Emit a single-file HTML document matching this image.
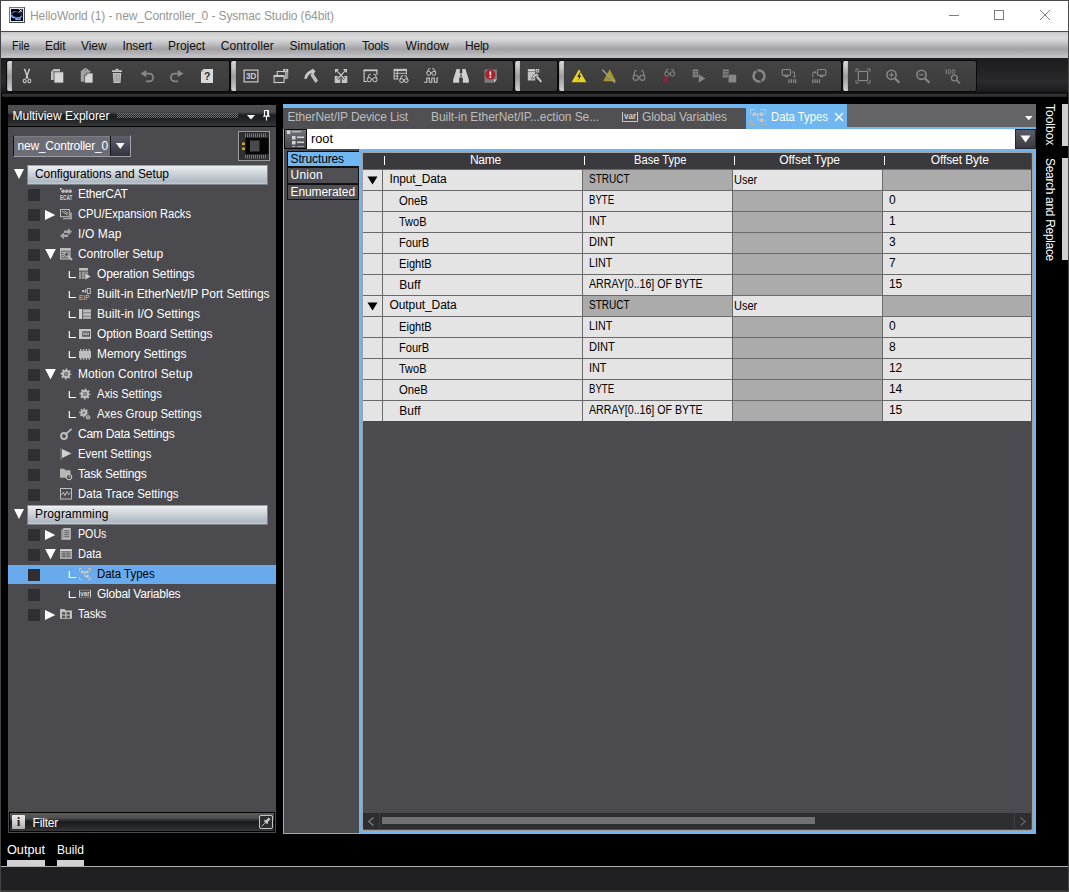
<!DOCTYPE html>
<html lang="en">
<head>
<meta charset="utf-8">
<title>HelloWorld (1) - new_Controller_0 - Sysmac Studio (64bit)</title>
<style>
html,body{margin:0;padding:0;background:#000;}
body{width:1069px;height:892px;overflow:hidden;font-family:"Liberation Sans",sans-serif;font-size:12px;}
#app{position:relative;width:1069px;height:892px;overflow:hidden;background:#000;}
#app div,#app span.t,#app svg{position:absolute;box-sizing:border-box;}
span.t{white-space:pre;line-height:16px;height:16px;}
.grp{background:linear-gradient(#444444,#3f3f3f 55%,#3a3a3a);border-radius:2px;box-shadow:0 0 0 1px #0a0a0a;}
.grip{background:linear-gradient(90deg,rgba(0,0,0,.18),rgba(0,0,0,0) 35%,rgba(0,0,0,0) 70%,rgba(0,0,0,.12)),linear-gradient(#dadada,#c6c6c6 22%,#9e9e9e 52%,#bcbcbc 80%,#d2d2d2);border-radius:2px 0 0 2px;}
.cb{background:#2f2f33;}
.cl{background:#e4e4e4;}
.cg{background:#ababab;}
</style>
</head>
<body>
<div id="app">
<div style="left:0px;top:0px;width:1069px;height:31px;background:#fff;"></div>
<span class="t" style="left:30px;top:8px;color:#969696;letter-spacing:-0.092px;">HelloWorld (1) - new_Controller_0 - Sysmac Studio (64bit)</span>
<svg style="left:9px;top:7px" width="16" height="16" viewBox="0 0 16 16"><rect x="0.500" y="0.500" width="15" height="15" fill="#e8e8ee" stroke="#70747a" stroke-width="1"/><path d="M0.500 15.500h15V0.500" fill="none" stroke="#454950" stroke-width="1"/><rect x="2" y="2" width="12" height="12" fill="#000"/><ellipse cx="7.800" cy="7.800" rx="5" ry="3" transform="rotate(18 7.800 7.800)" fill="none" stroke="#1f3f9e" stroke-width="1.500" opacity=".850"/><path d="M2.300 6.500Q3.500 4.600 6.500 4.600" fill="none" stroke="#4a78d8" stroke-width="1"/><path d="M2.300 8Q3.500 10.800 7 11Q10.500 11.300 12.800 9.200" fill="none" stroke="#62a8e6" stroke-width="1.400"/><path d="M2.500 9.800L4.500 11.300" stroke="#8fd0f4" stroke-width=".900"/><rect x="6" y="11.200" width="6" height="1.900" fill="#4c86dc"/><rect x="7" y="11.600" width="1.200" height="1.500" fill="#9cc8f0"/><rect x="9.300" y="11.600" width="1.600" height="1.500" fill="#84b4ec"/><path d="M10 2.200L13.200 5.400M13.200 2.200L10 5.400" stroke="#fff" stroke-width="1"/></svg>
<svg style="left:940px;top:5px" width="120" height="22" viewBox="0 0 120 22"><path d="M9 10.5h10" stroke="#7e7e7e" stroke-width="1" fill="none"/><rect x="54.500" y="5.500" width="9" height="9" stroke="#7e7e7e" stroke-width="1" fill="none"/><path d="M100 5l10 10M110 5l-10 10" stroke="#7e7e7e" stroke-width="1" fill="none"/></svg>
<div style="left:0px;top:31px;width:1069px;height:27px;background:linear-gradient(#4a4a4a 0,#4a4a4a 1px,#c6c6c8 1px,#dcdcdc 6px,#d0d0d2 10px,#a3a3a7 18px,#acacb0 21px,#c4c4c6 26px,#bcbcbe 27px);"></div>
<span class="t" style="left:11.5px;top:37.5px;color:#101010;transform-origin:0 50%;transform:scaleX(0.9047);">File</span>
<span class="t" style="left:45px;top:37.5px;color:#101010;letter-spacing:-0.047px;">Edit</span>
<span class="t" style="left:81px;top:37.5px;color:#101010;letter-spacing:-0.074px;">View</span>
<span class="t" style="left:122.5px;top:37.5px;color:#101010;letter-spacing:-0.086px;">Insert</span>
<span class="t" style="left:168px;top:37.5px;color:#101010;letter-spacing:-0.051px;">Project</span>
<span class="t" style="left:220.8px;top:37.5px;color:#101010;letter-spacing:0.097px;">Controller</span>
<span class="t" style="left:289.5px;top:37.5px;color:#101010;letter-spacing:-0.003px;">Simulation</span>
<span class="t" style="left:362px;top:37.5px;color:#101010;letter-spacing:-0.243px;">Tools</span>
<span class="t" style="left:405.5px;top:37.5px;color:#101010;letter-spacing:0.102px;">Window</span>
<span class="t" style="left:465px;top:37.5px;color:#101010;letter-spacing:-0.222px;">Help</span>
<div style="left:0px;top:58px;width:1069px;height:36px;background:linear-gradient(#1c1c1e,#222224 30%,#2a2a2e 65%,#1e1e20 90%,#0c0c0c);"></div>
<div class="grp" style="left:7px;top:61px;width:222px;height:30px;"></div>
<div class="grip" style="left:7px;top:61px;width:5px;height:30px;"></div>
<div class="grp" style="left:231px;top:61px;width:282px;height:30px;"></div>
<div class="grip" style="left:231px;top:61px;width:5px;height:30px;"></div>
<div class="grp" style="left:515px;top:61px;width:42px;height:30px;"></div>
<div class="grip" style="left:515px;top:61px;width:5px;height:30px;"></div>
<div class="grp" style="left:559px;top:61px;width:282px;height:30px;"></div>
<div class="grip" style="left:559px;top:61px;width:5px;height:30px;"></div>
<div class="grp" style="left:843px;top:61px;width:133px;height:30px;"></div>
<div class="grip" style="left:843px;top:61px;width:5px;height:30px;"></div>
<div style="left:2px;top:94px;width:1065px;height:3px;background:linear-gradient(#3e4042 0,#303234 1px,#2a2c2e 2px,#222426 3px);border-radius:1px;"></div>
<svg style="left:19px;top:68px" width="16" height="16" viewBox="0 0 16 16"><path d="M4.700 0.800L6.300 0.800L9.600 10.300L8.400 11z" fill="#cacaca"/><path d="M11.300 0.800L9.700 0.800L6.400 10.300L7.600 11z" fill="#cacaca"/><ellipse cx="5.700" cy="13" rx="1.400" ry="1.800" fill="none" stroke="#cacaca" stroke-width="1.100" transform="rotate(-20 5.700 13)"/><ellipse cx="10.300" cy="13" rx="1.400" ry="1.800" fill="none" stroke="#cacaca" stroke-width="1.100" transform="rotate(20 10.300 13)"/></svg>
<svg style="left:49px;top:68px" width="16" height="16" viewBox="0 0 16 16"><path d="M4.500 1H11v11H2V3.500z" fill="#c2c2c2"/><path d="M2 3.500h2.500V1z" fill="#8c8c8c"/><path d="M5 3.800h9.700V15H5z" fill="#d6d6d6" stroke="#4a4a4a" stroke-width=".800"/></svg>
<svg style="left:79px;top:68px" width="16" height="16" viewBox="0 0 16 16"><rect x="1.800" y="2.300" width="9.400" height="11.500" rx="1" fill="#a4a4a4"/><path d="M4.500 2.800V1.600Q6.500 0 8.500 1.600V2.800" fill="none" stroke="#b8b8b8" stroke-width="1.200"/><path d="M7.800 5H14v10H5.600V7.200z" fill="#d6d6d6" stroke="#4a4a4a" stroke-width=".800"/><path d="M5.600 7.200h2.200V5" fill="#9a9a9a" stroke="#4a4a4a" stroke-width=".600"/></svg>
<svg style="left:109px;top:68px" width="16" height="16" viewBox="0 0 16 16"><rect x="6.500" y="0.800" width="3" height="1.400" fill="#cacaca"/><rect x="3" y="2.300" width="10" height="1.700" rx=".500" fill="#cacaca"/><path d="M3.800 5h8.400l-.700 10H4.500z" fill="#c4c4c4"/><path d="M5.800 6v8M7.300 6v8M8.800 6v8M10.300 6v8" stroke="#8a8a8a" stroke-width=".700"/></svg>
<svg style="left:139px;top:68px" width="16" height="16" viewBox="0 0 16 16"><path d="M6.500 5.600H10.200A3.900 3.900 0 0 1 10.200 13.400H6.800" fill="none" stroke="#878787" stroke-width="1.800"/><path d="M1.500 5.600L7.300 2v7.200z" fill="#878787"/></svg>
<svg style="left:169px;top:68px" width="16" height="16" viewBox="0 0 16 16"><path d="M9.500 5.600H5.800A3.900 3.900 0 0 0 5.800 13.400H9.200" fill="none" stroke="#878787" stroke-width="1.800"/><path d="M14.500 5.600L8.700 2v7.200z" fill="#878787"/></svg>
<svg style="left:199px;top:68px" width="16" height="16" viewBox="0 0 16 16"><path d="M4.500 1H14v14H2V3.500z" fill="#d8d8d8"/><path d="M2 3.500h2.500V1z" fill="#9a9a9a"/><text x="8.300" y="12.300" font-family="Liberation Sans, sans-serif" font-weight="bold" font-size="10.500" text-anchor="middle" fill="#2e2e2e">?</text></svg>
<svg style="left:243px;top:68px" width="16" height="16" viewBox="0 0 16 16"><rect x="1.100" y="2.100" width="13.800" height="11.800" fill="none" stroke="#cacaca" stroke-width="1.200"/><text x="8" y="11.300" font-family="Liberation Sans, sans-serif" font-weight="bold" font-size="8.500" text-anchor="middle" fill="#cacaca" letter-spacing="-0.300">3D</text></svg>
<svg style="left:273px;top:68px" width="16" height="16" viewBox="0 0 16 16"><rect x="4.200" y="3.500" width="8.500" height="7" fill="none" stroke="#cacaca" stroke-width="1.100"/><rect x="1.100" y="7.500" width="10" height="7" fill="#444" stroke="#cacaca" stroke-width="1.100"/><path d="M1.100 8.300h10" stroke="#cacaca" stroke-width="1.500"/><rect x="10.200" y="1" width="5" height="3.200" fill="#cacaca"/><rect x="12.400" y="4" width="2.800" height="6.800" fill="#9e9e9e"/><rect x="12" y="1.800" width="1.500" height="1.300" fill="#555"/></svg>
<svg style="left:303px;top:68px" width="16" height="16" viewBox="0 0 16 16"><path d="M1.300 11Q1.300 5.500 7.500 2.300L10 0.800L12.600 3.600L10 6.300L8.300 5.300Q5 6.300 3.800 10.800z" fill="#cacaca"/><path d="M7.300 7L10 4.800L15 12.800L12.400 15z" fill="#c0c0c0"/></svg>
<svg style="left:333px;top:68px" width="16" height="16" viewBox="0 0 16 16"><rect x="1.700" y="8" width="5.600" height="7" fill="#c6c6c6"/><rect x="8.700" y="8" width="5.600" height="7" fill="#c6c6c6"/><path d="M4.500 11L12.800 2.200M11.500 11L3.200 2.200" stroke="#444" stroke-width="2.600" fill="none"/><path d="M4.500 11L12.800 2.200M11.500 11L3.200 2.200" stroke="#cacaca" stroke-width="1.100" fill="none"/><path d="M14 1v4l-4-4zM2 1v4l4-4z" fill="#cacaca"/></svg>
<svg style="left:363px;top:68px" width="16" height="16" viewBox="0 0 16 16"><path d="M1.100 2v11.500h3" fill="none" stroke="#cacaca" stroke-width="1.100"/><path d="M0.600 2.300h13.800" stroke="#cacaca" stroke-width="1.800"/><path d="M13.900 2v5" stroke="#cacaca" stroke-width="1.100"/><circle cx="6.4" cy="11.7" r="2.1" fill="none" stroke="#cacaca" stroke-width="1"/><circle cx="12" cy="11.7" r="2.1" fill="none" stroke="#cacaca" stroke-width="1"/><path d="M8.5 11.2h1.3999999999999995" stroke="#cacaca" stroke-width="1" fill="none"/><path d="M4.6000000000000005 10.7L6.300000000000001 6.3h1.600M13.799999999999999 10.7L12.1 6.3h-1.600" stroke="#cacaca" stroke-width="1" fill="none"/></svg>
<svg style="left:393px;top:68px" width="16" height="16" viewBox="0 0 16 16"><rect x="1.100" y="1.300" width="12.300" height="9.700" fill="none" stroke="#cacaca" stroke-width="1"/><path d="M1 2.200h12.500" stroke="#cacaca" stroke-width="1.700"/><path d="M1 5.300h12.500M1 8h6M4.300 3v8" stroke="#cacaca" stroke-width=".900"/><rect x="5.500" y="6.300" width="9.800" height="9" fill="#444"/><circle cx="8.6" cy="12.6" r="1.9" fill="none" stroke="#cacaca" stroke-width="1"/><circle cx="13.2" cy="12.6" r="1.9" fill="none" stroke="#cacaca" stroke-width="1"/><path d="M10.5 12.1h0.7999999999999998" stroke="#cacaca" stroke-width="1" fill="none"/><path d="M6.999999999999999 11.6L8.7 7.8h1.600M14.799999999999999 11.6L13.1 7.8h-1.600" stroke="#cacaca" stroke-width="1" fill="none"/></svg>
<svg style="left:423px;top:68px" width="16" height="16" viewBox="0 0 16 16"><circle cx="5.7" cy="5.3" r="2" fill="none" stroke="#cacaca" stroke-width="1"/><circle cx="10.8" cy="5.3" r="2" fill="none" stroke="#cacaca" stroke-width="1"/><path d="M7.7 4.8h1.1000000000000005" stroke="#cacaca" stroke-width="1" fill="none"/><path d="M4.0 4.3L5.7 0.8h1.600M12.5 4.3L10.8 0.8h-1.600" stroke="#cacaca" stroke-width="1" fill="none"/><path d="M1 14.300h2.800V10h2.500v4.300h2.500V10h2.500v4.300H14V10h1.300" fill="none" stroke="#cacaca" stroke-width="1.100"/></svg>
<svg style="left:453px;top:68px" width="16" height="16" viewBox="0 0 16 16"><path d="M3.600 1h3.200v4.500h2.400V1h3.200l3.400 10.500v3.300H9.800V9.600H6.200v5.200H0.200v-3.300z" fill="#d0d0d0"/><rect x="7" y="6.800" width="2" height="1.800" fill="#555"/></svg>
<svg style="left:483px;top:68px" width="16" height="16" viewBox="0 0 16 16"><path d="M1.500 1.500h12.500v9.500L11 14.800H1.500z" fill="#7c7c7c"/><path d="M11 14.800V11.500h3z" fill="#c4c4c4"/><circle cx="7.300" cy="6.600" r="5" fill="#a8222c"/><rect x="6.500" y="3.300" width="1.700" height="4.300" rx=".500" fill="#f0e6e6"/><rect x="6.500" y="8.300" width="1.700" height="1.700" fill="#f0e6e6"/></svg>
<svg style="left:527px;top:68px" width="16" height="16" viewBox="0 0 16 16"><rect x="0.800" y="1.200" width="7.400" height="2.200" fill="#dcdcdc"/><rect x="0.800" y="3.900" width="7.400" height="8.600" fill="#c2c2c2"/><rect x="9.200" y="1.500" width="2.600" height="2.600" fill="#6a6a6a" stroke="#d0d0d0" stroke-width=".800"/><path d="M4.300 10.600Q5 7.200 9.800 5.200L12 7.300L10.600 8.700L9.600 8Q7.200 8.600 6.200 11z" fill="#dadada" stroke="#444" stroke-width=".700"/><path d="M8.600 9L10.400 7.500L15.200 13.200L13.600 14.800z" fill="#cfcfcf" stroke="#444" stroke-width=".500"/></svg>
<svg style="left:571px;top:68px" width="16" height="16" viewBox="0 0 16 16"><path d="M8 1.200L15.400 14.300H0.600z" fill="#e9d41e"/><path d="M8.800 4.300L6.300 9h2L7 13l3.200-5.400h-2L9.600 4.300z" fill="#1a1a1a"/></svg>
<svg style="left:601px;top:68px" width="16" height="16" viewBox="0 0 16 16"><path d="M8.600 1.200L15 13.300H2.200z" fill="#a6982a"/><path d="M5.500 9.800L11 11.500" stroke="#7c7222" stroke-width="1"/><path d="M1.300 1.800L14 14.700" stroke="#9c9c9c" stroke-width="1.500"/></svg>
<svg style="left:631px;top:68px" width="16" height="16" viewBox="0 0 16 16"><circle cx="4.7" cy="9.8" r="2.6" fill="none" stroke="#878787" stroke-width="1.1"/><circle cx="11.3" cy="9.8" r="2.6" fill="none" stroke="#878787" stroke-width="1.1"/><path d="M7.300000000000001 9.3h1.4000000000000004" stroke="#878787" stroke-width="1.1" fill="none"/><path d="M2.4 8.8L4.1 2.6h1.600M13.6 8.8L11.9 2.6h-1.600" stroke="#878787" stroke-width="1.1" fill="none"/></svg>
<svg style="left:661px;top:68px" width="16" height="16" viewBox="0 0 16 16"><circle cx="6" cy="6" r="2.2" fill="none" stroke="#878787" stroke-width="1"/><circle cx="11.6" cy="6" r="2.2" fill="none" stroke="#878787" stroke-width="1"/><path d="M8.2 5.5h1.1999999999999993" stroke="#878787" stroke-width="1" fill="none"/><path d="M4.1 5L5.8 1.4h1.600M13.5 5L11.8 1.4h-1.600" stroke="#878787" stroke-width="1" fill="none"/><path d="M1.700 8.800L7.500 14.400M7.500 8.800L1.700 14.400" stroke="#9e1c38" stroke-width="1.600" fill="none"/></svg>
<svg style="left:691px;top:68px" width="16" height="16" viewBox="0 0 16 16"><path d="M1.700 1.500h5.600v7.800H1.700z" fill="#878787"/><path d="M2.500 3.500h4M2.500 5.300h4M2.500 7.100h4" stroke="#444" stroke-width=".700"/><path d="M7.500 6L14.700 10.500L7.500 15z" fill="#878787" stroke="#444" stroke-width=".600"/></svg>
<svg style="left:721px;top:68px" width="16" height="16" viewBox="0 0 16 16"><path d="M1.800 1.500h5.800v8H1.800z" fill="#878787"/><path d="M2.500 3.500h4.300M2.500 5.300h4.300M2.500 7.100h4.300" stroke="#444" stroke-width=".700"/><rect x="7.200" y="6.300" width="8.200" height="8.500" fill="#878787" stroke="#444" stroke-width=".600"/></svg>
<svg style="left:751px;top:68px" width="16" height="16" viewBox="0 0 16 16"><circle cx="8" cy="8" r="5.500" fill="none" stroke="#878787" stroke-width="2.500"/><path d="M4 1l3 3M12 15l-3-3" stroke="#444" stroke-width="1.300"/></svg>
<svg style="left:781px;top:68px" width="16" height="16" viewBox="0 0 16 16"><rect x="1.200" y="1.500" width="8.300" height="5.800" rx="1" fill="none" stroke="#878787" stroke-width="1.200"/><path d="M3.800 8.600h3.200" stroke="#878787" stroke-width="1.400"/><path d="M10.800 4h2.600v4.600" fill="none" stroke="#878787" stroke-width="1"/><path d="M11.800 8.300h3.200l-1.600 1.800z" fill="#878787"/><path d="M8 11.300v3.800M10.300 11.300v3.800M12.600 11.300v3.800M14.700 11.300v3.800" stroke="#878787" stroke-width="1.300"/></svg>
<svg style="left:811px;top:68px" width="16" height="16" viewBox="0 0 16 16"><rect x="6.500" y="1.500" width="8.300" height="5.800" rx="1" fill="none" stroke="#878787" stroke-width="1.200"/><path d="M9 8.600h3.200" stroke="#878787" stroke-width="1.400"/><path d="M1.800 9.500V4.300h2.400" fill="none" stroke="#878787" stroke-width="1"/><path d="M3.800 2.600v3.400l1.800-1.700z" fill="#878787"/><path d="M1.800 11.300v3.800M4 11.300v3.800M6.200 11.300v3.800M8.400 11.300v3.800" stroke="#878787" stroke-width="1.300"/></svg>
<svg style="left:855px;top:68px" width="16" height="16" viewBox="0 0 16 16"><rect x="3.400" y="3.400" width="9.200" height="9.200" fill="none" stroke="#878787" stroke-width="1.200"/><path d="M1 4V1h3M12 1h3v3M15 12v3h-3M4 15H1v-3" fill="none" stroke="#878787" stroke-width="1"/></svg>
<svg style="left:885px;top:68px" width="16" height="16" viewBox="0 0 16 16"><circle cx="6.500" cy="6.800" r="4.600" fill="none" stroke="#878787" stroke-width="1.600"/><path d="M10 10.400L14.400 14.800" stroke="#878787" stroke-width="2.200"/><path d="M4.300 6.800h4.400M6.500 4.600v4.400" stroke="#878787" stroke-width="1.200"/></svg>
<svg style="left:915px;top:68px" width="16" height="16" viewBox="0 0 16 16"><circle cx="6.500" cy="6.800" r="4.600" fill="none" stroke="#878787" stroke-width="1.600"/><path d="M10 10.400L14.400 14.800" stroke="#878787" stroke-width="2.200"/><path d="M4.300 6.800h4.400" stroke="#878787" stroke-width="1.200"/></svg>
<svg style="left:945px;top:68px" width="16" height="16" viewBox="0 0 16 16"><path d="M1.200 1.200v5" stroke="#878787" stroke-width="1"/><ellipse cx="4.500" cy="3.700" rx="1.300" ry="2.400" fill="none" stroke="#878787" stroke-width=".900"/><ellipse cx="8.600" cy="3.700" rx="1.300" ry="2.400" fill="none" stroke="#878787" stroke-width=".900"/><circle cx="9.300" cy="10" r="2.900" fill="none" stroke="#878787" stroke-width="1.300"/><path d="M11.500 12.200L14.800 15.300" stroke="#878787" stroke-width="1.600"/></svg>
<div style="left:8px;top:105px;width:268px;height:22px;background:linear-gradient(#505052 0,#4b4b4d 7px,#38383a 8.500px,#1c1e20 10px,#222426 15px,#323436 20.500px,#000 21px);"></div>
<span class="t" style="left:12.5px;top:108px;color:#fff;letter-spacing:-0.020px;">Multiview Explorer</span>
<svg style="left:117px;top:113px" width="121" height="5" viewBox="0 0 121 5"><defs><pattern id="dots" width="2" height="2" patternUnits="userSpaceOnUse"><rect x="0" y="0" width="1" height="1" fill="#707070"/><rect x="1" y="1" width="1" height="1" fill="#707070"/></pattern></defs><rect width="121" height="5" fill="url(#dots)"/></svg>
<svg style="left:247px;top:114.500px" width="8" height="5" viewBox="0 0 8 5"><path d="M0 0h8L4 4.500z" fill="#fff"/></svg>
<svg style="left:262px;top:110px" width="9" height="11" viewBox="0 0 9 11"><path d="M2.500 0.500h4v5.500h-4zM1 6.300h7M4.500 6.500v4" fill="none" stroke="#fff" stroke-width="1.100"/><path d="M5.800 1v5" stroke="#fff" stroke-width="1.200"/></svg>
<div style="left:8px;top:127px;width:268px;height:706px;background:#4b4b4f;"></div>
<div style="left:13px;top:135px;width:118px;height:22px;background:#6c6c74;border:1px solid #a0a0a6;border-left-color:#141418;border-top-color:#4a4a50;box-shadow:inset 0 1px 0 #7e7e86;"></div>
<div style="left:110px;top:136px;width:20px;height:20px;background:linear-gradient(#60606c,#4c4c58 45%,#33333d);border-left:1px solid #18181c;"></div>
<svg style="left:116px;top:143px" width="9" height="6" viewBox="0 0 9 6"><path d="M0 0h8.600L4.300 6z" fill="#fff"/></svg>
<span class="t" style="left:17.5px;top:138px;color:#fff;letter-spacing:-0.223px;">new_Controller_0</span>
<div style="left:238px;top:131px;width:32px;height:30px;background:#303032;border:1px solid #9a9a9a;"></div>
<svg style="left:239px;top:132px" width="30" height="28" viewBox="0 0 30 28"><defs><pattern id="pins" width="2" height="2" patternUnits="userSpaceOnUse"><rect x="0" y="0" width="1" height="2" fill="#777"/></pattern></defs><rect x="6" y="1.500" width="22" height="3.500" fill="url(#pins)"/><rect x="6" y="23" width="22" height="3.500" fill="url(#pins)"/><rect x="6.500" y="6" width="23" height="16" fill="#050505"/><rect x="11" y="8.500" width="9.500" height="11" fill="#4a4a4a"/><rect x="3" y="10.500" width="3" height="2.500" fill="#c8a820"/><rect x="3" y="15.500" width="3" height="2.500" fill="#c8a820"/></svg>
<div style="left:27px;top:165px;width:241px;height:20px;background:linear-gradient(#eef0f2,#dde1e5 20%,#c6ccd2 55%,#aeb8c0 88%,#c2cad0);border:1px solid #7c8288;border-top-color:#9aa0a6;"></div>
<span class="t" style="left:35px;top:166px;color:#000;letter-spacing:-0.060px;">Configurations and Setup</span>
<svg style="left:13.500px;top:169px" width="10" height="10" viewBox="0 0 10 10"><path d="M0 0h10L5 10z" fill="#fff"/></svg>
<div style="left:27px;top:505px;width:241px;height:20px;background:linear-gradient(#eef0f2,#dde1e5 20%,#c6ccd2 55%,#aeb8c0 88%,#c2cad0);border:1px solid #7c8288;border-top-color:#9aa0a6;"></div>
<span class="t" style="left:35px;top:506px;color:#000;letter-spacing:0.134px;">Programming</span>
<svg style="left:13.500px;top:509px" width="10" height="10" viewBox="0 0 10 10"><path d="M0 0h10L5 10z" fill="#fff"/></svg>
<div class="cb" style="left:28px;top:189px;width:12px;height:12px;"></div>
<svg style="left:60px;top:188px;overflow:visible" width="12" height="12" viewBox="0 0 12 12"><rect x="0" y="0" width="1.600" height="1.600" fill="#e0e0e0"/><path d="M1 3.300h11" stroke="#bdbdbd" stroke-width="1"/><rect x="1.800" y="1.600" width="2.600" height="3.200" fill="#bdbdbd"/><rect x="5.300" y="1.600" width="2.600" height="3.200" fill="#bdbdbd"/><rect x="8.800" y="1.600" width="2.600" height="3.200" fill="#bdbdbd"/><text x="0" y="12" font-family="Liberation Sans, sans-serif" font-size="7" font-weight="bold" textLength="12.300" lengthAdjust="spacingAndGlyphs" fill="#d2d2d2">ECAT</text></svg>
<span class="t" style="left:78px;top:186px;color:#fff;letter-spacing:-0.287px;">EtherCAT</span>
<div class="cb" style="left:28px;top:209px;width:12px;height:12px;"></div>
<svg style="left:45px;top:209.5px" width="11" height="10" viewBox="0 0 11 10"><path d="M0 0v10L10.300 5z" fill="#fff"/></svg>
<svg style="left:60px;top:208px;overflow:visible" width="12" height="12" viewBox="0 0 12 12"><rect x="0.500" y="1.500" width="8.800" height="7.200" fill="none" stroke="#bdbdbd" stroke-width="1"/><path d="M2 3.200L7.500 7M4.500 3L8 5.300" stroke="#bdbdbd" stroke-width="1"/><rect x="9.300" y="4.500" width="2.700" height="5.500" fill="#9a9a9a"/><path d="M3 10.700h9" stroke="#bdbdbd" stroke-width="1"/></svg>
<span class="t" style="left:78px;top:206px;color:#fff;transform-origin:0 50%;transform:scaleX(0.9309);">CPU/Expansion Racks</span>
<div class="cb" style="left:28px;top:229px;width:12px;height:12px;"></div>
<svg style="left:60px;top:228px;overflow:visible" width="12" height="12" viewBox="0 0 12 12"><path d="M4 2.500h4V0.300L12 3.700L8 7.100V4.900H4z" fill="#a6a6a6"/><path d="M8 6.600H4V4.400L0 7.800L4 11.200V9h4z" fill="#a6a6a6"/></svg>
<span class="t" style="left:78px;top:226px;color:#fff;letter-spacing:0.116px;">I/O Map</span>
<div class="cb" style="left:28px;top:249px;width:12px;height:12px;"></div>
<svg style="left:45px;top:249px" width="11" height="11" viewBox="0 0 11 11"><path d="M0.200 0h10.600L5.500 10.400z" fill="#fff"/></svg>
<svg style="left:60px;top:248px;overflow:visible" width="12" height="12" viewBox="0 0 12 12"><rect x="0.500" y="0.500" width="9.500" height="10.500" fill="#77777a" stroke="#bdbdbd" stroke-width="1"/><rect x="0" y="0" width="10.500" height="2.600" fill="#bdbdbd"/><path d="M2 4.500h3M2 6.500h2M2 8.500h2" stroke="#bdbdbd" stroke-width=".800"/><circle cx="6.600" cy="6.400" r="2" fill="#4b4b4f" stroke="#bdbdbd" stroke-width="1"/><path d="M8 8L12 12" stroke="#bdbdbd" stroke-width="1.800"/></svg>
<span class="t" style="left:78px;top:246px;color:#fff;letter-spacing:-0.107px;">Controller Setup</span>
<div class="cb" style="left:28px;top:269px;width:12px;height:12px;"></div>
<svg style="left:68px;top:270px" width="9" height="9" viewBox="0 0 9 9"><path d="M1.300 1v6.500h6.700" stroke="#fff" stroke-width="1.150" fill="none"/></svg>
<svg style="left:79px;top:268px;overflow:visible" width="12" height="12" viewBox="0 0 12 12"><rect x="0" y="0" width="9" height="11" fill="#9a9a9a"/><rect x="0" y="0" width="9" height="2.200" fill="#bdbdbd"/><path d="M2.500 3v8M0 3.300h9" stroke="#4b4b4f" stroke-width=".700"/><path d="M6 4.800L12 8.400L6 12z" fill="#cfcfcf" stroke="#4b4b4f" stroke-width=".600"/></svg>
<span class="t" style="left:97px;top:266px;color:#fff;letter-spacing:-0.106px;">Operation Settings</span>
<div class="cb" style="left:28px;top:289px;width:12px;height:12px;"></div>
<svg style="left:68px;top:290px" width="9" height="9" viewBox="0 0 9 9"><path d="M1.300 1v6.500h6.700" stroke="#fff" stroke-width="1.150" fill="none"/></svg>
<svg style="left:79px;top:288px;overflow:visible" width="12" height="12" viewBox="0 0 12 12"><rect x="3" y="2" width="2.200" height="2.200" fill="#bdbdbd"/><path d="M5 3.100h3" stroke="#bdbdbd" stroke-width=".900"/><rect x="8.300" y="0.500" width="3" height="5" fill="none" stroke="#bdbdbd" stroke-width="1"/><path d="M6.500 1v4" stroke="#bdbdbd" stroke-width=".800"/><text x="0" y="12" font-family="Liberation Sans, sans-serif" font-size="7.500" textLength="10.500" lengthAdjust="spacingAndGlyphs" fill="#c8c8c8">EIP</text></svg>
<span class="t" style="left:97px;top:286px;color:#fff;letter-spacing:-0.040px;">Built-in EtherNet/IP Port Settings</span>
<div class="cb" style="left:28px;top:309px;width:12px;height:12px;"></div>
<svg style="left:68px;top:310px" width="9" height="9" viewBox="0 0 9 9"><path d="M1.300 1v6.500h6.700" stroke="#fff" stroke-width="1.150" fill="none"/></svg>
<svg style="left:79px;top:308px;overflow:visible" width="12" height="12" viewBox="0 0 12 12"><rect x="0" y="1" width="3" height="10" fill="#d0d0d0"/><rect x="3.600" y="1" width="8.400" height="10" fill="#8c8c8c"/><rect x="4.300" y="1.800" width="7.700" height="2.200" fill="#bdbdbd"/><rect x="4.300" y="5.400" width="7.700" height="2.200" fill="#bdbdbd"/><rect x="4.300" y="9" width="7.700" height="1.500" fill="#bdbdbd"/></svg>
<span class="t" style="left:97px;top:306px;color:#fff;letter-spacing:0.013px;">Built-in I/O Settings</span>
<div class="cb" style="left:28px;top:329px;width:12px;height:12px;"></div>
<svg style="left:68px;top:330px" width="9" height="9" viewBox="0 0 9 9"><path d="M1.300 1v6.500h6.700" stroke="#fff" stroke-width="1.150" fill="none"/></svg>
<svg style="left:79px;top:328px;overflow:visible" width="12" height="12" viewBox="0 0 12 12"><rect x="0" y="1" width="12" height="10" fill="#c6c6c6"/><rect x="3.300" y="3.300" width="7.700" height="5.400" fill="#4e4e50"/><rect x="4.600" y="5" width="2.200" height="1.800" fill="none" stroke="#c6c6c6" stroke-width=".700"/><rect x="7.500" y="5" width="2.200" height="1.800" fill="none" stroke="#c6c6c6" stroke-width=".700"/></svg>
<span class="t" style="left:97px;top:326px;color:#fff;letter-spacing:-0.096px;">Option Board Settings</span>
<div class="cb" style="left:28px;top:349px;width:12px;height:12px;"></div>
<svg style="left:68px;top:350px" width="9" height="9" viewBox="0 0 9 9"><path d="M1.300 1v6.500h6.700" stroke="#fff" stroke-width="1.150" fill="none"/></svg>
<svg style="left:79px;top:348px;overflow:visible" width="12" height="12" viewBox="0 0 12 12"><rect x="0" y="3" width="12" height="7" fill="#bdbdbd"/><path d="M1.800 1v2M4.600 1v2M7.400 1v2M10.200 1v2M1.800 10v1.700M4.600 10v1.700M7.400 10v1.700M10.200 10v1.700" stroke="#bdbdbd" stroke-width="1.400"/></svg>
<span class="t" style="left:97px;top:346px;color:#fff;letter-spacing:-0.042px;">Memory Settings</span>
<div class="cb" style="left:28px;top:369px;width:12px;height:12px;"></div>
<svg style="left:45px;top:369px" width="11" height="11" viewBox="0 0 11 11"><path d="M0.200 0h10.600L5.500 10.400z" fill="#fff"/></svg>
<svg style="left:60px;top:368px;overflow:visible" width="12" height="12" viewBox="0 0 12 12"><circle cx="6" cy="6" r="3.10" fill="none" stroke="#bdbdbd" stroke-width="2.200"/><circle cx="6" cy="6" r="4.60" fill="none" stroke="#bdbdbd" stroke-width="1.700" stroke-dasharray="1.806 1.806" stroke-dashoffset="0.903"/><rect x="4.4" y="4.4" width="3.200" height="3.200" fill="#8e8e8e"/></svg>
<span class="t" style="left:78px;top:366px;color:#fff;letter-spacing:0.093px;">Motion Control Setup</span>
<div class="cb" style="left:28px;top:389px;width:12px;height:12px;"></div>
<svg style="left:68px;top:390px" width="9" height="9" viewBox="0 0 9 9"><path d="M1.300 1v6.500h6.700" stroke="#fff" stroke-width="1.150" fill="none"/></svg>
<svg style="left:79px;top:388px;overflow:visible" width="12" height="12" viewBox="0 0 12 12"><circle cx="6" cy="6" r="3.10" fill="none" stroke="#bdbdbd" stroke-width="2.200"/><circle cx="6" cy="6" r="4.60" fill="none" stroke="#bdbdbd" stroke-width="1.700" stroke-dasharray="1.806 1.806" stroke-dashoffset="0.903"/><rect x="4.4" y="4.4" width="3.200" height="3.200" fill="#8e8e8e"/></svg>
<span class="t" style="left:97px;top:386px;color:#fff;transform-origin:0 50%;transform:scaleX(0.9369);">Axis Settings</span>
<div class="cb" style="left:28px;top:409px;width:12px;height:12px;"></div>
<svg style="left:68px;top:410px" width="9" height="9" viewBox="0 0 9 9"><path d="M1.300 1v6.500h6.700" stroke="#fff" stroke-width="1.150" fill="none"/></svg>
<svg style="left:79px;top:408px;overflow:visible" width="12" height="12" viewBox="0 0 12 12"><circle cx="4.8" cy="4.8" r="2.30" fill="none" stroke="#bdbdbd" stroke-width="2.200"/><circle cx="4.8" cy="4.8" r="3.80" fill="none" stroke="#bdbdbd" stroke-width="1.700" stroke-dasharray="1.492 1.492" stroke-dashoffset="0.746"/><circle cx="4.800" cy="4.800" r="1.100" fill="#8e8e8e"/><circle cx="9" cy="9.300" r="2.500" fill="#bdbdbd" stroke="#4b4b4f" stroke-width=".700"/><circle cx="9" cy="9.300" r="1" fill="#77777a"/></svg>
<span class="t" style="left:97px;top:406px;color:#fff;transform-origin:0 50%;transform:scaleX(0.9504);">Axes Group Settings</span>
<div class="cb" style="left:28px;top:429px;width:12px;height:12px;"></div>
<svg style="left:60px;top:428px;overflow:visible" width="12" height="12" viewBox="0 0 12 12"><circle cx="4" cy="8" r="2.900" fill="none" stroke="#bdbdbd" stroke-width="2"/><path d="M5 6.800L11.500 0.800" stroke="#bdbdbd" stroke-width="1.600"/></svg>
<span class="t" style="left:78px;top:426px;color:#fff;letter-spacing:-0.254px;">Cam Data Settings</span>
<div class="cb" style="left:28px;top:449px;width:12px;height:12px;"></div>
<svg style="left:60px;top:448px;overflow:visible" width="12" height="12" viewBox="0 0 12 12"><path d="M1 0v12" stroke="#8a8a8a" stroke-width="1"/><path d="M2 1L11.500 5.500L2 10z" fill="#d0d0d0"/></svg>
<span class="t" style="left:78px;top:446px;color:#fff;transform-origin:0 50%;transform:scaleX(0.9484);">Event Settings</span>
<div class="cb" style="left:28px;top:469px;width:12px;height:12px;"></div>
<svg style="left:60px;top:468px;overflow:visible" width="12" height="12" viewBox="0 0 12 12"><path d="M0 0.800h4.200l1.200 1.500H10.500v7.500H0z" fill="#b6b6b6"/><circle cx="9" cy="9" r="2.800" fill="#4b4b4f" stroke="#d0d0d0" stroke-width="1"/><path d="M9 7.500V9h1.400" fill="none" stroke="#d0d0d0" stroke-width=".800"/></svg>
<span class="t" style="left:78px;top:466px;color:#fff;letter-spacing:-0.221px;">Task Settings</span>
<div class="cb" style="left:28px;top:489px;width:12px;height:12px;"></div>
<svg style="left:60px;top:488px;overflow:visible" width="12" height="12" viewBox="0 0 12 12"><rect x="0.500" y="0.500" width="11" height="10.500" fill="none" stroke="#bdbdbd" stroke-width="1"/><path d="M1.500 7L3.300 4.300L5 7.600L6.800 3.600L8.500 6.600L10.500 4.500" fill="none" stroke="#bdbdbd" stroke-width="1"/></svg>
<span class="t" style="left:78px;top:486px;color:#fff;transform-origin:0 50%;transform:scaleX(0.9536);">Data Trace Settings</span>
<div class="cb" style="left:28px;top:529px;width:12px;height:12px;"></div>
<svg style="left:45px;top:529.5px" width="11" height="10" viewBox="0 0 11 10"><path d="M0 0v10L10.300 5z" fill="#fff"/></svg>
<svg style="left:60px;top:528px;overflow:visible" width="12" height="12" viewBox="0 0 12 12"><path d="M3.500 0H10.800V11.700H1.400V2.200z" fill="#bdbdbd"/><path d="M1.400 2.200h2.100V0z" fill="#8a8a8a"/><path d="M4.200 2.800h5.200M4.200 4.800h5.200M4.200 6.800h5.200M4.200 8.800h5.200" stroke="#58585c" stroke-width="1"/><path d="M2.900 2.500v8" stroke="#7c7c80" stroke-width=".900"/></svg>
<span class="t" style="left:78px;top:526px;color:#fff;transform-origin:0 50%;transform:scaleX(0.8871);">POUs</span>
<div class="cb" style="left:28px;top:549px;width:12px;height:12px;"></div>
<svg style="left:45px;top:549px" width="11" height="11" viewBox="0 0 11 11"><path d="M0.200 0h10.600L5.500 10.400z" fill="#fff"/></svg>
<svg style="left:60px;top:548px;overflow:visible" width="12" height="12" viewBox="0 0 12 12"><rect x="0" y="1" width="12" height="9.600" fill="#a9a9a9"/><rect x="0" y="1" width="12" height="2.500" fill="#dcdcdc"/><path d="M4 3.500v7M8 3.500v7M0 3.700h12M0 6h12M0 8.300h12" stroke="#5c5c5e" stroke-width=".800"/><rect x="0.400" y="1.400" width="11.200" height="8.800" fill="none" stroke="#bdbdbd" stroke-width=".800"/></svg>
<span class="t" style="left:78px;top:546px;color:#fff;transform-origin:0 50%;transform:scaleX(0.9267);">Data</span>
<div style="left:8px;top:565px;width:268px;height:19px;background:#68aaec;"></div>
<div class="cb" style="left:28px;top:569px;width:12px;height:12px;"></div>
<svg style="left:68px;top:570px" width="9" height="9" viewBox="0 0 9 9"><path d="M1.300 1v6.500h6.700" stroke="#fff" stroke-width="1.150" fill="none"/></svg>
<svg style="left:79px;top:568px;overflow:visible" width="12" height="12" viewBox="0 0 12 12"><path d="M0.500 3V0.500H3M9 0.500h2.500V3M11.500 9v2.500H9M3 11.500H0.500V9" fill="none" stroke="#cdbfa8" stroke-width="1"/><rect x="2" y="2.800" width="2.400" height="2.400" fill="#d9d3c8"/><rect x="7.300" y="2.800" width="2.400" height="2.400" fill="#d9d3c8"/><rect x="7.300" y="7.200" width="2.400" height="2.400" fill="#d9d3c8"/><path d="M4.400 4h2.900M5.800 4v4.400h1.500" fill="none" stroke="#d9d3c8" stroke-width=".900"/></svg>
<span class="t" style="left:97px;top:566px;color:#000;transform-origin:0 50%;transform:scaleX(0.9523);">Data Types</span>
<div class="cb" style="left:28px;top:589px;width:12px;height:12px;"></div>
<svg style="left:68px;top:590px" width="9" height="9" viewBox="0 0 9 9"><path d="M1.300 1v6.500h6.700" stroke="#fff" stroke-width="1.150" fill="none"/></svg>
<svg style="left:79px;top:588px;overflow:visible" width="12" height="12" viewBox="0 0 12 12"><path d="M0.500 2v7.500M11.500 2v7.500" stroke="#d0d0d0" stroke-width="1"/><path d="M0 2.300h12M0 9.200h12" stroke="#8e8e8e" stroke-width=".800"/><text x="6" y="8.200" font-family="Liberation Sans, sans-serif" font-size="7.500" font-weight="bold" text-anchor="middle" textLength="9.500" lengthAdjust="spacingAndGlyphs" fill="#d6d6d6">var</text></svg>
<span class="t" style="left:97px;top:586px;color:#fff;letter-spacing:-0.236px;">Global Variables</span>
<div class="cb" style="left:28px;top:609px;width:12px;height:12px;"></div>
<svg style="left:45px;top:609.5px" width="11" height="10" viewBox="0 0 11 10"><path d="M0 0v10L10.300 5z" fill="#fff"/></svg>
<svg style="left:60px;top:608px;overflow:visible" width="12" height="12" viewBox="0 0 12 12"><path d="M0 1h4.600l1 1.600H12v8.100H0z" fill="#c2c2c2"/><rect x="2" y="4.200" width="3.200" height="2.300" fill="#4e4e50"/><rect x="6.600" y="4.200" width="3.200" height="2.300" fill="#4e4e50"/><rect x="2" y="7.600" width="3.200" height="2.300" fill="#4e4e50"/><rect x="6.600" y="7.600" width="3.200" height="2.300" fill="#4e4e50"/></svg>
<span class="t" style="left:78px;top:606px;color:#fff;transform-origin:0 50%;transform:scaleX(0.9255);">Tasks</span>
<div style="left:9px;top:812px;width:266px;height:20px;background:linear-gradient(#5a5a5a,#505052 28%,#2c2e30 40%,#1a1c1e 50%,#26282a 80%,#38383a);border:1px solid #000;"></div>
<div style="left:12px;top:815px;width:13px;height:14px;background:linear-gradient(#ececec,#d0d0d0 50%,#aeaeae);border-radius:1px;"></div>
<span class="t" style="left:12px;top:814px;width:13px;text-align:center;color:#2a1c1c;font-family:&quot;Liberation Serif&quot;,serif;font-weight:bold;font-size:13px;">i</span>
<span class="t" style="left:32.6px;top:815px;color:#fff;letter-spacing:-0.179px;">Filter</span>
<div style="left:259px;top:815px;width:14px;height:14px;border:1px solid #c4c4c4;border-radius:2px;background:#2a2c2e;"></div>
<svg style="left:260px;top:816px" width="12" height="12" viewBox="0 0 12 12"><path d="M1.500 10.500L5.500 6.500" stroke="#bdbdbd" stroke-width="1"/><path d="M3.800 5L7 8.200L8 7.200L8 5.800L10.500 3.300L8.700 1.500L6.200 4L4.800 4z" fill="#c6c6c6"/></svg>
<span class="t" style="left:7px;top:842px;color:#fff;transform-origin:0 50%;transform:scaleX(1.0546);">Output</span>
<span class="t" style="left:57px;top:842px;color:#fff;letter-spacing:0.062px;">Build</span>
<div style="left:7px;top:860px;width:38px;height:6px;background:#d2d2d2;"></div>
<div style="left:57px;top:860px;width:27px;height:6px;background:#d2d2d2;"></div>
<div style="left:0px;top:866px;width:1069px;height:26px;background:linear-gradient(#b0b0b0 0,#b0b0b0 1px,#202022 1px,#202022 24.500px,#3a3a3a 24.500px);"></div>
<div style="left:283px;top:104px;width:564px;height:4px;background:#70b6f0;"></div>
<div style="left:283px;top:108px;width:463px;height:21px;background:#505052;"></div>
<div style="left:746px;top:104px;width:101px;height:25px;background:#70b6f0;"></div>
<div style="left:847px;top:104px;width:189px;height:23px;background:#646466;"></div>
<div style="left:847px;top:127px;width:189px;height:2px;background:#70b6f0;"></div>
<span class="t" style="left:287.5px;top:109px;color:#bcbcbc;letter-spacing:-0.145px;">EtherNet/IP Device List</span>
<span class="t" style="left:431px;top:109px;color:#bcbcbc;letter-spacing:-0.072px;">Built-in EtherNet/IP...ection Se...</span>
<span class="t" style="left:642px;top:109px;color:#bcbcbc;letter-spacing:-0.136px;">Global Variables</span>
<span class="t" style="left:771px;top:109px;color:#fff;transform-origin:0 50%;transform:scaleX(0.9424);">Data Types</span>
<svg style="left:622px;top:112px" width="16" height="10" viewBox="0 0 16 10"><path d="M0.500 0v9.500h15V0" fill="none" stroke="#c8c8c8" stroke-width="1"/><text x="8" y="7.300" font-family="Liberation Sans, sans-serif" font-size="8.500" font-weight="bold" text-anchor="middle" textLength="12" lengthAdjust="spacingAndGlyphs" fill="#d0d0d0">var</text></svg>
<svg style="left:750px;top:109px" width="16" height="16" viewBox="0 0 16 16"><defs><linearGradient id="dtg" x1="0" y1="0" x2="0" y2="1"><stop offset="0" stop-color="#a9d2f4"/><stop offset="1" stop-color="#c4b29e"/></linearGradient></defs><path d="M0.500 5.500V0.500H5.500M10.500 0.500h5V5.500M15.500 10.500v5H10.500M5.500 15.500H0.500V10.500" fill="none" stroke="url(#dtg)" stroke-width="1"/><rect x="2.500" y="3.500" width="3.500" height="3.500" fill="#cfc6bd"/><rect x="10" y="3.500" width="3.500" height="3.500" fill="#cfc6bd"/><rect x="10" y="9.500" width="3.500" height="3.500" fill="#cfc6bd"/><path d="M6 5.200h4M7.700 5.200v6h2.300" fill="none" stroke="#bcd0e4" stroke-width="1"/></svg>
<svg style="left:834px;top:112px" width="10" height="10" viewBox="0 0 10 10"><path d="M1 1l8 8M9 1l-8 8" stroke="#fff" stroke-width="1.300" fill="none"/></svg>
<svg style="left:1024.500px;top:116px" width="8" height="5" viewBox="0 0 8 5"><path d="M0 0h7.600L3.800 4.200z" fill="#fff"/></svg>
<div style="left:283px;top:129px;width:753px;height:20px;background:#fff;"></div>
<div style="left:283px;top:129px;width:1px;height:705px;background:#70b6f0;"></div>
<div style="left:283px;top:833px;width:77px;height:1px;background:#70b6f0;"></div>
<div style="left:284px;top:129px;width:23px;height:20px;background:linear-gradient(#9a9aa2 0,#70707a 1px,#54545c 60%,#484850);border:1px solid #0a0a0a;"></div>
<svg style="left:285px;top:130px" width="21" height="18" viewBox="0 0 21 18"><g fill="#d4d4d8"><rect x="2" y="0.500" width="3.300" height="3.500"/><rect x="7" y="1" width="9" height="1.500" fill="#b0b0b6"/><rect x="7" y="6" width="3.500" height="3.500"/><rect x="12" y="6.500" width="7" height="1.600"/><rect x="7" y="11" width="3.500" height="3.500"/><rect x="12" y="11.500" width="7" height="1.600"/><rect x="7" y="16" width="3.300" height="1" fill="#a4a4aa"/><rect x="12" y="16" width="7" height="1" fill="#a4a4aa"/></g></svg>
<span class="t" style="left:311px;top:131px;color:#000;transform-origin:0 50%;transform:scaleX(1.0634);">root</span>
<div style="left:1015px;top:129px;width:21px;height:20px;background:linear-gradient(#5c5c66,#3a3a42);border:1px solid #24242a;"></div>
<svg style="left:1020px;top:135px" width="11" height="8" viewBox="0 0 11 8"><path d="M0.500 0.500h10L5.500 7.500z" fill="#fff"/></svg>
<div style="left:284px;top:149px;width:76px;height:684px;background:#4b4b4f;"></div>
<div style="left:287px;top:151px;width:73px;height:16px;background:#70b6f0;border:1px solid #111;border-right:none;"></div>
<div style="left:287px;top:167px;width:72px;height:17px;background:#505054;border:1px solid #111;"></div>
<div style="left:287px;top:184px;width:72px;height:16px;background:#505054;border:1px solid #111;"></div>
<span class="t" style="left:290.5px;top:150.5px;color:#000;letter-spacing:-0.119px;">Structures</span>
<span class="t" style="left:290.5px;top:167px;color:#fff;letter-spacing:0.228px;">Union</span>
<span class="t" style="left:290.5px;top:184px;color:#fff;letter-spacing:-0.087px;">Enumerated</span>
<div style="left:359px;top:149px;width:677px;height:685px;background:#70b6f0;"></div>
<div style="left:361px;top:151px;width:672px;height:680px;background:#4b4b4f;border:2px solid #a2a2a2;border-right-width:1.500px;border-bottom-width:1.500px;border-radius:3px;"></div>
<div style="left:363px;top:153px;width:668px;height:16px;background:#3a3a3e;"></div>
<div style="left:384px;top:156px;width:1px;height:9px;background:#fff;"></div>
<div style="left:584px;top:156px;width:1px;height:9px;background:#fff;"></div>
<div style="left:734px;top:156px;width:1px;height:9px;background:#fff;"></div>
<div style="left:884px;top:156px;width:1px;height:9px;background:#fff;"></div>
<span class="t" style="left:470px;top:152px;color:#fff;letter-spacing:-0.304px;">Name</span>
<span class="t" style="left:633.8px;top:152px;color:#fff;transform-origin:0 50%;transform:scaleX(0.9295);">Base Type</span>
<span class="t" style="left:779.2px;top:152px;color:#fff;letter-spacing:-0.013px;">Offset Type</span>
<span class="t" style="left:930.7px;top:152px;color:#fff;letter-spacing:-0.095px;">Offset Byte</span>
<div style="left:363px;top:169px;width:668px;height:252px;background:#6a6a6a;"></div>
<div class="cl" style="left:363px;top:170px;width:19px;height:20px;"></div>
<div class="cl" style="left:383px;top:170px;width:199px;height:20px;"></div>
<div class="cg" style="left:583px;top:170px;width:149px;height:20px;"></div>
<div class="cl" style="left:733px;top:170px;width:149px;height:20px;"></div>
<div class="cg" style="left:883px;top:170px;width:148px;height:20px;"></div>
<svg style="left:367px;top:176px" width="11" height="9" viewBox="0 0 11 9"><path d="M0.500 0.500h10L5.500 8.500z" fill="#000"/></svg>
<span class="t" style="left:389.5px;top:171px;color:#000;letter-spacing:-0.172px;">Input_Data</span>
<span class="t" style="left:733.6px;top:172px;color:#000;transform-origin:0 50%;transform:scaleX(0.9194);">User</span>
<span class="t" style="left:589.3px;top:171px;color:#000;transform-origin:0 50%;transform:scaleX(0.8362);">STRUCT</span>
<div class="cl" style="left:363px;top:191px;width:19px;height:20px;"></div>
<div class="cl" style="left:383px;top:191px;width:199px;height:20px;"></div>
<div class="cl" style="left:583px;top:191px;width:149px;height:20px;"></div>
<div class="cg" style="left:733px;top:191px;width:149px;height:20px;"></div>
<div class="cl" style="left:883px;top:191px;width:148px;height:20px;"></div>
<span class="t" style="left:399.2px;top:193px;color:#000;transform-origin:0 50%;transform:scaleX(0.9385);">OneB</span>
<span class="t" style="left:889px;top:192px;color:#000;letter-spacing:-0.188px;">0</span>
<span class="t" style="left:589.3px;top:192px;color:#000;transform-origin:0 50%;transform:scaleX(0.8040);">BYTE</span>
<div class="cl" style="left:363px;top:212px;width:19px;height:20px;"></div>
<div class="cl" style="left:383px;top:212px;width:199px;height:20px;"></div>
<div class="cl" style="left:583px;top:212px;width:149px;height:20px;"></div>
<div class="cg" style="left:733px;top:212px;width:149px;height:20px;"></div>
<div class="cl" style="left:883px;top:212px;width:148px;height:20px;"></div>
<span class="t" style="left:399.2px;top:214px;color:#000;transform-origin:0 50%;transform:scaleX(0.9162);">TwoB</span>
<span class="t" style="left:889px;top:213px;color:#000;letter-spacing:-0.188px;">1</span>
<span class="t" style="left:589.3px;top:213px;color:#000;transform-origin:0 50%;transform:scaleX(0.9047);">INT</span>
<div class="cl" style="left:363px;top:233px;width:19px;height:20px;"></div>
<div class="cl" style="left:383px;top:233px;width:199px;height:20px;"></div>
<div class="cl" style="left:583px;top:233px;width:149px;height:20px;"></div>
<div class="cg" style="left:733px;top:233px;width:149px;height:20px;"></div>
<div class="cl" style="left:883px;top:233px;width:148px;height:20px;"></div>
<span class="t" style="left:399.2px;top:235px;color:#000;transform-origin:0 50%;transform:scaleX(0.9239);">FourB</span>
<span class="t" style="left:889px;top:234px;color:#000;letter-spacing:-0.188px;">3</span>
<span class="t" style="left:589.3px;top:234px;color:#000;transform-origin:0 50%;transform:scaleX(0.9250);">DINT</span>
<div class="cl" style="left:363px;top:254px;width:19px;height:20px;"></div>
<div class="cl" style="left:383px;top:254px;width:199px;height:20px;"></div>
<div class="cl" style="left:583px;top:254px;width:149px;height:20px;"></div>
<div class="cg" style="left:733px;top:254px;width:149px;height:20px;"></div>
<div class="cl" style="left:883px;top:254px;width:148px;height:20px;"></div>
<span class="t" style="left:399.2px;top:256px;color:#000;transform-origin:0 50%;transform:scaleX(0.9276);">EightB</span>
<span class="t" style="left:889px;top:255px;color:#000;letter-spacing:-0.188px;">7</span>
<span class="t" style="left:589.3px;top:255px;color:#000;transform-origin:0 50%;transform:scaleX(0.8918);">LINT</span>
<div class="cl" style="left:363px;top:275px;width:19px;height:20px;"></div>
<div class="cl" style="left:383px;top:275px;width:199px;height:20px;"></div>
<div class="cl" style="left:583px;top:275px;width:149px;height:20px;"></div>
<div class="cg" style="left:733px;top:275px;width:149px;height:20px;"></div>
<div class="cl" style="left:883px;top:275px;width:148px;height:20px;"></div>
<span class="t" style="left:399.2px;top:277px;color:#000;letter-spacing:0.065px;">Buff</span>
<span class="t" style="left:889px;top:276px;color:#000;letter-spacing:-0.180px;">15</span>
<span class="t" style="left:589.3px;top:276px;color:#000;transform-origin:0 50%;transform:scaleX(0.8849);">ARRAY[0..16] OF BYTE</span>
<div class="cl" style="left:363px;top:296px;width:19px;height:20px;"></div>
<div class="cl" style="left:383px;top:296px;width:199px;height:20px;"></div>
<div class="cg" style="left:583px;top:296px;width:149px;height:20px;"></div>
<div class="cl" style="left:733px;top:296px;width:149px;height:20px;"></div>
<div class="cg" style="left:883px;top:296px;width:148px;height:20px;"></div>
<svg style="left:367px;top:302px" width="11" height="9" viewBox="0 0 11 9"><path d="M0.500 0.500h10L5.500 8.500z" fill="#000"/></svg>
<span class="t" style="left:389.5px;top:297px;color:#000;letter-spacing:-0.086px;">Output_Data</span>
<span class="t" style="left:733.6px;top:298px;color:#000;transform-origin:0 50%;transform:scaleX(0.9194);">User</span>
<span class="t" style="left:589.3px;top:297px;color:#000;transform-origin:0 50%;transform:scaleX(0.8362);">STRUCT</span>
<div class="cl" style="left:363px;top:317px;width:19px;height:20px;"></div>
<div class="cl" style="left:383px;top:317px;width:199px;height:20px;"></div>
<div class="cl" style="left:583px;top:317px;width:149px;height:20px;"></div>
<div class="cg" style="left:733px;top:317px;width:149px;height:20px;"></div>
<div class="cl" style="left:883px;top:317px;width:148px;height:20px;"></div>
<span class="t" style="left:399.2px;top:319px;color:#000;transform-origin:0 50%;transform:scaleX(0.9276);">EightB</span>
<span class="t" style="left:889px;top:318px;color:#000;letter-spacing:-0.188px;">0</span>
<span class="t" style="left:589.3px;top:318px;color:#000;transform-origin:0 50%;transform:scaleX(0.8918);">LINT</span>
<div class="cl" style="left:363px;top:338px;width:19px;height:20px;"></div>
<div class="cl" style="left:383px;top:338px;width:199px;height:20px;"></div>
<div class="cl" style="left:583px;top:338px;width:149px;height:20px;"></div>
<div class="cg" style="left:733px;top:338px;width:149px;height:20px;"></div>
<div class="cl" style="left:883px;top:338px;width:148px;height:20px;"></div>
<span class="t" style="left:399.2px;top:340px;color:#000;transform-origin:0 50%;transform:scaleX(0.9239);">FourB</span>
<span class="t" style="left:889px;top:339px;color:#000;letter-spacing:-0.188px;">8</span>
<span class="t" style="left:589.3px;top:339px;color:#000;transform-origin:0 50%;transform:scaleX(0.9250);">DINT</span>
<div class="cl" style="left:363px;top:359px;width:19px;height:20px;"></div>
<div class="cl" style="left:383px;top:359px;width:199px;height:20px;"></div>
<div class="cl" style="left:583px;top:359px;width:149px;height:20px;"></div>
<div class="cg" style="left:733px;top:359px;width:149px;height:20px;"></div>
<div class="cl" style="left:883px;top:359px;width:148px;height:20px;"></div>
<span class="t" style="left:399.2px;top:361px;color:#000;transform-origin:0 50%;transform:scaleX(0.9162);">TwoB</span>
<span class="t" style="left:889px;top:360px;color:#000;letter-spacing:-0.180px;">12</span>
<span class="t" style="left:589.3px;top:360px;color:#000;transform-origin:0 50%;transform:scaleX(0.9047);">INT</span>
<div class="cl" style="left:363px;top:380px;width:19px;height:20px;"></div>
<div class="cl" style="left:383px;top:380px;width:199px;height:20px;"></div>
<div class="cl" style="left:583px;top:380px;width:149px;height:20px;"></div>
<div class="cg" style="left:733px;top:380px;width:149px;height:20px;"></div>
<div class="cl" style="left:883px;top:380px;width:148px;height:20px;"></div>
<span class="t" style="left:399.2px;top:382px;color:#000;transform-origin:0 50%;transform:scaleX(0.9385);">OneB</span>
<span class="t" style="left:889px;top:381px;color:#000;letter-spacing:-0.180px;">14</span>
<span class="t" style="left:589.3px;top:381px;color:#000;transform-origin:0 50%;transform:scaleX(0.8040);">BYTE</span>
<div class="cl" style="left:363px;top:401px;width:19px;height:20px;"></div>
<div class="cl" style="left:383px;top:401px;width:199px;height:20px;"></div>
<div class="cl" style="left:583px;top:401px;width:149px;height:20px;"></div>
<div class="cg" style="left:733px;top:401px;width:149px;height:20px;"></div>
<div class="cl" style="left:883px;top:401px;width:148px;height:20px;"></div>
<span class="t" style="left:399.2px;top:403px;color:#000;letter-spacing:0.065px;">Buff</span>
<span class="t" style="left:889px;top:402px;color:#000;letter-spacing:-0.180px;">15</span>
<span class="t" style="left:589.3px;top:402px;color:#000;transform-origin:0 50%;transform:scaleX(0.8849);">ARRAY[0..16] OF BYTE</span>
<div style="left:363px;top:813px;width:668px;height:16px;background:#2e2e30;"></div>
<div style="left:379px;top:813px;width:1px;height:16px;background:#3e3e40;"></div>
<div style="left:1014px;top:813px;width:1px;height:16px;background:#3e3e40;"></div>
<div style="left:382px;top:817px;width:433px;height:7px;background:#717173;"></div>
<svg style="left:367px;top:816.500px" width="8" height="9" viewBox="0 0 8 9"><path d="M6.500 0.500L1.700 4.500L6.500 8.500" stroke="#858587" stroke-width="1.100" fill="none"/></svg>
<svg style="left:1019px;top:816.500px" width="8" height="9" viewBox="0 0 8 9"><path d="M1.500 0.500L6.300 4.500L1.500 8.500" stroke="#68686a" stroke-width="1.100" fill="none"/></svg>
<span class="t" style="left:1042px;top:104px;color:#fff;transform-origin:0 0;transform:translate(16px,0) rotate(90deg);">Toolbox</span>
<span class="t" style="left:1042px;top:158px;color:#fff;letter-spacing:-0.320px;transform-origin:0 0;transform:translate(16px,0) rotate(90deg);">Search and Replace</span>
<div style="left:1062px;top:104px;width:6px;height:42px;background:#cfcfcf;"></div>
<div style="left:1062px;top:158px;width:6px;height:102px;background:#cfcfcf;"></div>
<div style="left:0px;top:0px;width:1px;height:892px;background:#454545;"></div>
<div style="left:0px;top:0px;width:1069px;height:1px;background:#4a4a4a;"></div>
<div style="left:1068px;top:0px;width:1px;height:892px;background:#4a4a4a;"></div>
</div>
</body>
</html>
